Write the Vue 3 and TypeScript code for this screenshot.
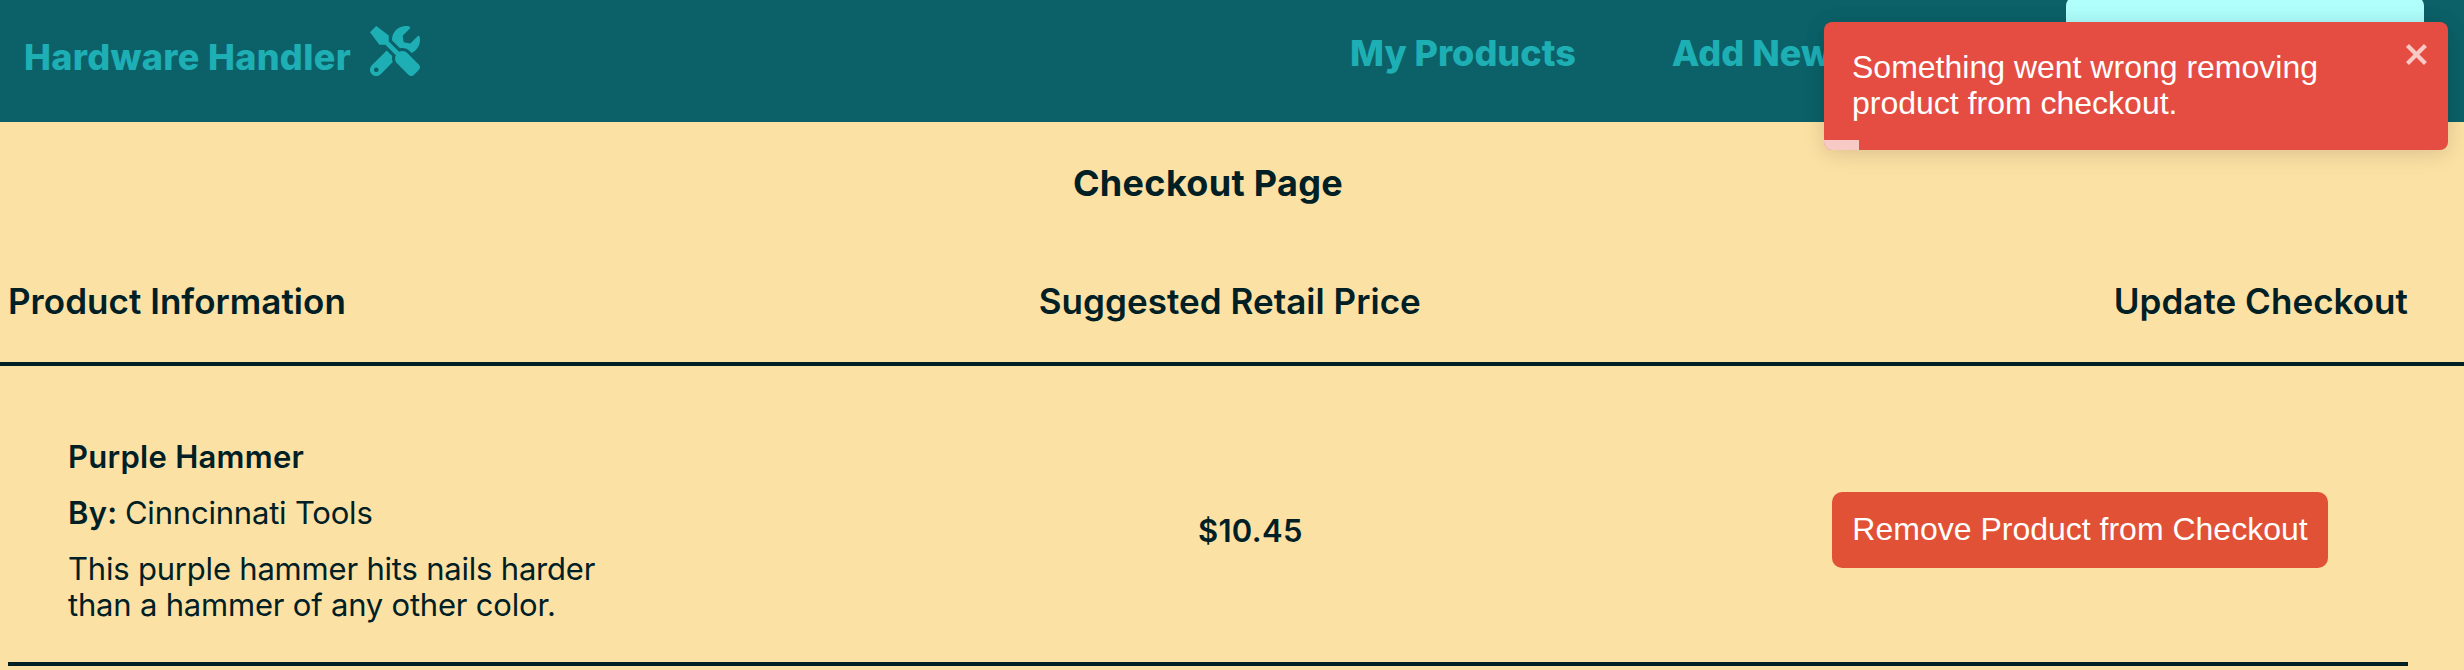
<script setup lang="ts">
interface Product {
  name: string
  brand: string
  description: string
  price: number
}

const navLinks: string[] = ['My Products', 'Add New']

const products: Product[] = [
  {
    name: 'Purple Hammer',
    brand: 'Cinncinnati Tools',
    description: 'This purple hammer hits nails harder than a hammer of any other color.',
    price: 10.45,
  },
]

const toastMessage = 'Something went wrong removing product from checkout.'
</script>

<template>
  <div class="page">
    <header class="navbar">
      <div class="brand">
        <span class="brand-name">Hardware Handler</span>
        <svg class="brand-icon" viewBox="0 0 512 512" aria-hidden="true">
          <path
            fill="currentColor"
            d="M501.1 395.7L384 278.6c-23.1-23.1-57.6-27.6-85.4-13.9L192 158.1V96L64 0 0 64l96 128h62.1l106.6 106.6c-13.6 27.8-9.2 62.3 13.9 85.4l117.1 117.1c14.6 14.6 38.2 14.6 52.7 0l52.7-52.7c14.5-14.6 14.5-38.2 0-52.7zM331.7 225c28.3 0 54.9 11 74.9 31l19.4 19.4c15.8-6.9 30.8-16.5 43.8-29.5 37.1-37.1 49.7-89.3 37.9-136.7-2.2-9-13.5-12.1-20.1-5.5l-74.4 74.4-67.9-11.3L334 98.9l74.4-74.4c6.6-6.6 3.4-17.9-5.7-20.2-47.4-11.7-99.6.9-136.6 37.9-28.5 28.5-41.9 66.1-41.2 103.6l82.1 82.1c8.1-1.9 16.5-2.9 24.7-2.9zm-103.9 82l-56.7-56.7L18.7 402.8c-25 25-25 65.5 0 90.5s65.5 25 90.5 0l123.6-123.6c-7.6-19.9-9.9-41.6-5-62.7zM64 472c-13.2 0-24-10.8-24-24 0-13.3 10.7-24 24-24s24 10.7 24 24c0 13.2-10.7 24-24 24z"
          />
        </svg>
      </div>
      <nav class="nav">
        <a v-for="link in navLinks" :key="link" class="nav-link">{{ link }}</a>
      </nav>
      <div class="checkout-tab"></div>
    </header>

    <main>
      <h1 class="title">Checkout Page</h1>
      <div class="columns">
        <span>Product Information</span>
        <span>Suggested Retail Price</span>
        <span>Update Checkout</span>
      </div>
      <section v-for="product in products" :key="product.name" class="product">
        <div class="info">
          <p class="strong">{{ product.name }}</p>
          <p><span class="strong">By:</span> {{ product.brand }}</p>
          <p>{{ product.description }}</p>
        </div>
        <p class="price">${{ product.price.toFixed(2) }}</p>
        <button class="remove" type="button">Remove Product from Checkout</button>
      </section>
    </main>

    <div class="toast" role="alert">
      <p class="toast-text">{{ toastMessage }}</p>
      <svg class="toast-close" viewBox="0 0 14 16" aria-hidden="true">
        <path
          fill="currentColor"
          d="M7.71 8.23l3.75 3.75-1.48 1.48-3.75-3.75-3.75 3.75L1 11.98l3.75-3.75L1 4.48 2.48 3l3.75 3.75L9.98 3l1.48 1.48-3.75 3.75z"
        />
      </svg>
      <div class="toast-progress"></div>
    </div>
  </div>
</template>

<style>
body {
  background: #fce1a4;
}
</style>

<style scoped>
.page {
  position: relative;
  height: 670px;
  overflow: hidden;
  background: #fce1a4;
  color: #002025;
  font-family: Inter, 'Liberation Sans', sans-serif;
}

p,
h1 {
  margin: 0;
}

.navbar {
  display: flex;
  align-items: flex-start;
  box-sizing: border-box;
  height: 122px;
  padding: 0 40px 0 24px;
  background: #0c6168;
  color: #1eafb5;
  font-size: 36px;
  font-weight: 800;
  line-height: 42px;
  white-space: nowrap;
}

.brand {
  display: flex;
  width: 1326px;
}

.brand-name {
  width: 346px;
  margin-top: 36px;
  letter-spacing: 0.33px;
}

.brand-icon {
  width: 50px;
  height: 50px;
  margin-top: 26px;
}

.nav {
  display: flex;
  gap: 96px;
  margin-top: 32px;
}

.checkout-tab {
  width: 358px;
  height: 92px;
  margin: -4px 0 0 auto;
  border-radius: 10px;
  background: #b0fffd;
}

.title {
  padding: 40px 48px 0 0;
  font-size: 36px;
  font-weight: 700;
  line-height: 42px;
  letter-spacing: 0.33px;
  text-align: center;
}

.columns {
  display: flex;
  justify-content: space-between;
  box-sizing: border-box;
  height: 162px;
  padding: 76px 56px 0 8px;
  border-bottom: 4px solid #002025;
  font-size: 35px;
  font-weight: 600;
  line-height: 42px;
  letter-spacing: 0.04px;
}

.product {
  display: grid;
  grid-template-columns: 1190px 1fr auto;
  box-sizing: border-box;
  height: 300px;
  margin: 0 56px 0 8px;
  padding-right: 80px;
  border-bottom: 4px solid #002025;
  font-size: 31px;
}

.info {
  display: flex;
  flex-direction: column;
  gap: 20px;
  width: 560px;
  padding: 73px 0 0 60px;
  line-height: 36px;
  letter-spacing: -0.2px;
}

.strong {
  font-weight: 600;
  letter-spacing: 0.28px;
}

span.strong {
  margin-right: -1px;
}

.price {
  margin-top: 147px;
  font-weight: 600;
  line-height: 36px;
  letter-spacing: 0.3px;
}

.remove {
  width: 496px;
  height: 76px;
  margin-top: 126px;
  padding: 0 0 2px;
  border: 0;
  border-radius: 10px;
  background: #e15136;
  color: #fff;
  font: 32px 'Liberation Sans', Arial, sans-serif;
}

.toast {
  position: absolute;
  top: 22px;
  right: 16px;
  display: flex;
  justify-content: space-between;
  box-sizing: border-box;
  width: 624px;
  height: 128px;
  padding: 16px 16px 0 28px;
  overflow: hidden;
  border-radius: 8px;
  background: #e54d42;
  color: #fff;
  box-shadow:
    0 2px 20px rgba(0, 0, 0, 0.1),
    0 4px 30px rgba(0, 0, 0, 0.05);
  font: 32px/36px 'Liberation Sans', Arial, sans-serif;
}

.toast-text {
  width: 510px;
  padding-top: 11px;
}

.toast-close {
  width: 28px;
  height: 32px;
  color: rgba(255, 255, 255, 0.7);
}

.toast-progress {
  position: absolute;
  bottom: 0;
  left: 0;
  width: 35px;
  height: 10px;
  background: rgba(255, 255, 255, 0.7);
}
</style>
